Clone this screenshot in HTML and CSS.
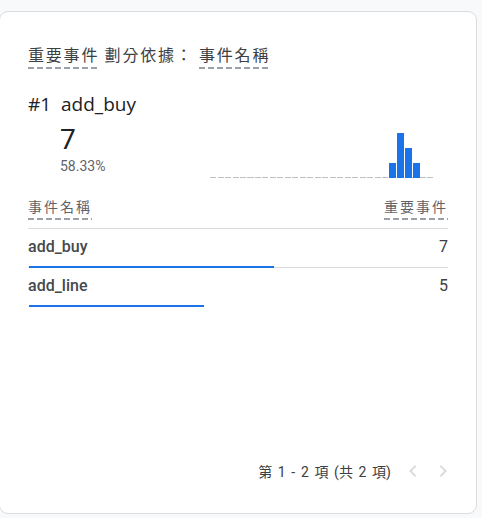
FILE: index.html
```html
<!DOCTYPE html>
<html lang="zh-Hant">
<head>
<meta charset="utf-8">
<link rel="stylesheet" href="styles.css">
</head>
<body>
<div class="card">
  <div class="title">
    <span class="dash">重要事件</span> 劃分依據： <span class="dash">事件名稱</span>
  </div>
  <div class="top-name">#1&nbsp; add_buy</div>
  <div class="summary">
    <div class="metric">
      <div class="big">7</div>
      <div class="pct">58.33%</div>
    </div>
    <div class="spark">
      <div class="bars">
        <span class="bar" style="height:15px"></span>
        <span class="bar" style="height:45px"></span>
        <span class="bar" style="height:30px"></span>
        <span class="bar" style="height:15px"></span>
      </div>
    </div>
  </div>
  <div class="thead">
    <span class="th dash-sm">事件名稱</span>
    <span class="th dash-sm">重要事件</span>
  </div>
  <div class="row">
    <span class="name">add_buy</span>
    <span class="val">7</span>
    <span class="fill" style="width:58.33%"></span>
  </div>
  <div class="row last">
    <span class="name">add_line</span>
    <span class="val">5</span>
    <span class="fill" style="width:41.67%"></span>
  </div>
  <div class="footer">
    <span class="pages">第 1 - 2 項 (共 2 項)</span>
    <svg class="chev" width="24" height="24" viewBox="0 0 24 24"><path d="M15.4 7.4 14 6l-6 6 6 6 1.4-1.4L10.8 12z"/></svg>
    <svg class="chev" width="24" height="24" viewBox="0 0 24 24"><path d="M8.6 16.6 10 18l6-6-6-6-1.4 1.4 4.6 4.6z"/></svg>
  </div>
</div>
</body>
</html>
```
FILE: styles.css
```css
* { box-sizing: border-box; }
html, body { margin: 0; padding: 0; }
body {
  background: #f8f9fa;
  width: 482px;
  height: 518px;
  overflow: hidden;
  font-family: Roboto, "Noto Sans CJK TC", "Noto Sans", sans-serif;
  color: #202124;
}
.card {
  margin: 11px 0 0 -1px;
  width: 478px;
  height: 503px;
  background: #fff;
  border: 1px solid #dadce0;
  border-radius: 9px;
  padding: 30px 28px 0 28px;
  display: flex;
  flex-direction: column;
}
.title {
  font-family: "Noto Sans CJK TC", sans-serif;
  font-size: 16px;
  letter-spacing: 1.8px;
  line-height: 24px;
  color: #3c4043;
}
.dash, .dash-sm {
  padding-bottom: 3px;
  background-image: repeating-linear-gradient(to right, #9aa0a6 0 6px, transparent 6px 9px);
  background-size: 100% 2px;
  background-repeat: no-repeat;
  background-position: left bottom;
}
.top-name {
  margin-top: 26px;
  font-family: "Open Sans", Roboto, sans-serif;
  font-size: 19px;
  line-height: 24px;
  color: #202124;
}
.summary {
  display: flex;
  align-items: flex-end;
  margin-top: 8px;
}
.metric {
  padding-left: 32px;
}
.big {
  font-size: 28px;
  line-height: 32px;
}
.pct {
  font-size: 14px;
  line-height: 20px;
  color: #5f6368;
}
.spark {
  margin-left: auto;
  margin-right: 14px;
  width: 224px;
  height: 46px;
  margin-bottom: -2px;
  display: flex;
  align-items: flex-end;
  justify-content: flex-end;
  padding-right: 14px;
  background-image: repeating-linear-gradient(to right, #bdc1c6 0 6px, transparent 6px 7.5px);
  background-size: 100% 1px;
  background-repeat: no-repeat;
  background-position: left bottom;
}
.bars {
  display: flex;
  align-items: flex-end;
  gap: 1px;
}
.bar {
  width: 7px;
  background: #1a73e8;
}
.thead {
  display: flex;
  justify-content: space-between;
  margin-top: 20px;
  padding-bottom: 8px;
  border-bottom: 1px solid #dadce0;
  line-height: 20px;
}
.th {
  font-family: "Noto Sans CJK TC", sans-serif;
  font-size: 14px;
  letter-spacing: 2px;
  color: #5f6368;
  padding-bottom: 4px;
}
.row {
  position: relative;
  display: flex;
  justify-content: space-between;
  height: 39px;
  padding-top: 8px;
  border-bottom: 1px solid #dadce0;
  font-size: 16px;
  line-height: 20px;
  color: #3c4043;
}
.row.last { border-bottom-color: transparent; }
.name { font-weight: 500; color: #45494d; }
.val { font-size: 16px; }
.fill {
  position: absolute;
  left: 1px;
  bottom: -1px;
  height: 2px;
  background: #1a73e8;
}
.footer {
  margin-top: auto;
  margin-bottom: 30px;
  display: flex;
  align-items: center;
  justify-content: flex-end;
  margin-right: -7px;
}
.pages {
  font-family: Roboto, "Noto Sans CJK TC", sans-serif;
  font-size: 14px;
  word-spacing: 2.2px;
  color: #3c4043;
  margin-right: 10px;
}
.chev {
  fill: #dadce0;
}
.chev + .chev { margin-left: 6px; }
```
